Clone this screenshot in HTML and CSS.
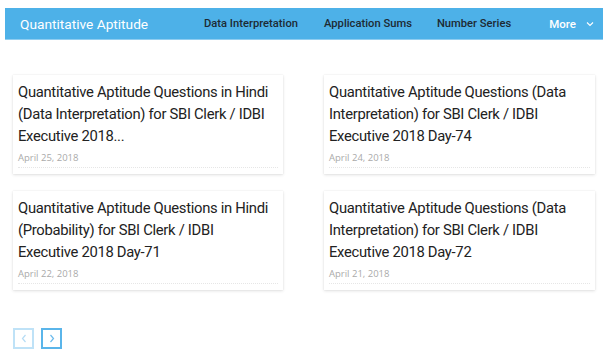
FILE: index.html
```html
<!DOCTYPE html>
<html>
<head>
<meta charset="utf-8">
<link rel="stylesheet" href="styles.css">
</head>
<body>
<header class="topbar">
  <div class="brand">Quantitative Aptitude</div>
  <nav class="nav">
    <a class="nav-link nav-1">Data Interpretation</a>
    <a class="nav-link nav-2">Application Sums</a>
    <a class="nav-link nav-3">Number Series</a>
    <a class="nav-more">More
      <svg class="chev" width="8" height="6" viewBox="0 0 8 6"><path d="M1 1.5 L4 4.5 L7 1.5" fill="none" stroke="#fff" stroke-width="1.1"/></svg>
    </a>
  </nav>
</header>
<main class="grid">
  <article class="card">
    <h2 class="title">Quantitative Aptitude Questions in Hindi (Data Interpretation) for SBI Clerk / IDBI Executive 2018...</h2>
    <div class="date">April 25, 2018</div>
  </article>
  <article class="card">
    <h2 class="title">Quantitative Aptitude Questions (Data Interpretation) for SBI Clerk / IDBI Executive 2018 Day-74</h2>
    <div class="date">April 24, 2018</div>
  </article>
  <article class="card">
    <h2 class="title">Quantitative Aptitude Questions in Hindi (Probability) for SBI Clerk / IDBI<br>Executive 2018 Day-71</h2>
    <div class="date">April 22, 2018</div>
  </article>
  <article class="card">
    <h2 class="title">Quantitative Aptitude Questions (Data Interpretation) for SBI Clerk / IDBI Executive 2018 Day-72</h2>
    <div class="date">April 21, 2018</div>
  </article>
</main>
<div class="pager">
  <span class="pg pg-prev"><svg width="6" height="9" viewBox="0 0 6 9"><path d="M4.5 1 L1.5 4.5 L4.5 8" fill="none" stroke="#b5dcf5" stroke-width="1.2"/></svg></span>
  <span class="pg pg-next"><svg width="6" height="9" viewBox="0 0 6 9"><path d="M1.5 1 L4.5 4.5 L1.5 8" fill="none" stroke="#6cbbec" stroke-width="1.2"/></svg></span>
</div>
</body>
</html>
```
FILE: styles.css
```css
* { box-sizing: border-box; }
html, body { margin: 0; padding: 0; background: #fff; }
body { font-family: Roboto, "Liberation Sans", sans-serif; width: 606px; height: 361px; overflow: hidden; }

.topbar {
  margin: 8px 3px 0 5px;
  height: 32px;
  background: #4db1e8;
  border-bottom: 1px solid #8fcdf0;
  display: flex;
  align-items: center;
  padding-left: 15px;
}
.brand {
  color: #fff;
  font-size: 13.7px;
  width: 184px;
  flex-shrink: 0;
  white-space: nowrap;
}
.nav { display: flex; align-items: center; flex-shrink: 0; }
.nav-link {
  color: #1d2a33;
  font-size: 11.2px;
  font-weight: 500;
  white-space: nowrap;
}
.nav-1 { margin-right: 26px; }
.nav-2 { margin-right: 25px; }
.nav-3 { margin-right: 38px; }
.nav-more {
  color: #fff;
  font-size: 11.5px;
  font-weight: 500;
  display: flex;
  align-items: center;
}
.chev { margin-left: 10px; }

.grid {
  display: grid;
  grid-template-columns: 270px 271px;
  column-gap: 41px;
  row-gap: 17px;
  margin: 35px 0 0 13px;
}
.card {
  height: 99px;
  background: #fff;
  box-shadow: 0 1px 3px rgba(0,0,0,0.12), 0 0 1px rgba(0,0,0,0.10);
  padding: 6px 1px 0 5px;
  display: flex;
  flex-direction: column;
}
.title {
  margin: 0;
  font-size: 14.8px;
  letter-spacing: -0.3px;
  font-weight: 400;
  line-height: 22px;
  color: #222;
  height: 66px;
}
.date {
  margin-top: 4px;
  margin-right: 4px;
  font-family: "Open Sans", sans-serif;
  font-size: 9.5px;
  color: #aaa;
  padding-bottom: 3px;
  border-bottom: 1px dotted #e6e6e6;
}

.pager {
  display: flex;
  gap: 7px;
  margin: 38px 0 0 13px;
}
.pg {
  width: 21px;
  height: 21px;
  display: flex;
  align-items: center;
  justify-content: center;
  border: 2px solid #bfe2f7;
}
.pg-next { border-color: #5ab5ea; }
```
